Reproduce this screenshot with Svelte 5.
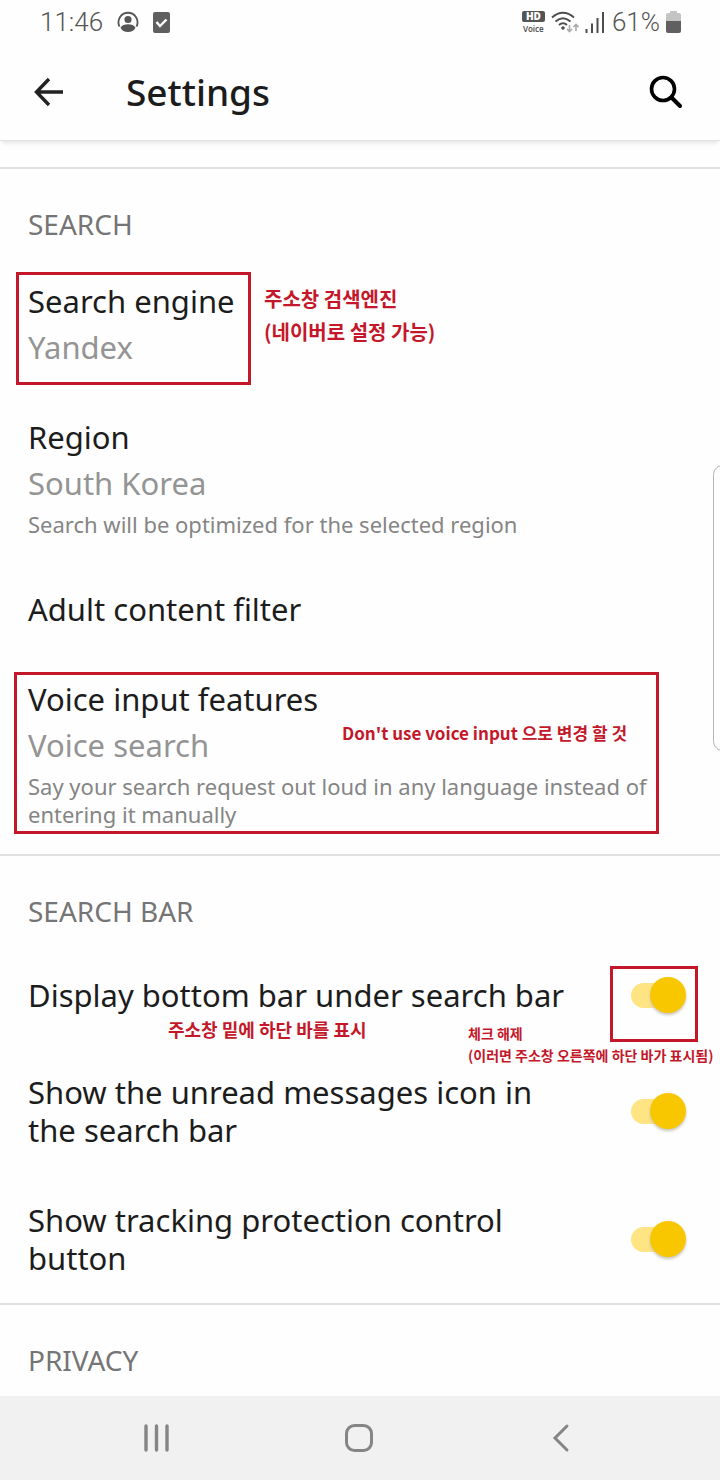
<script>
  let searchItems = [
    {
      title: "Search engine",
      value: "Yandex",
      mark: "mark-engine",
      note: ["주소창 검색엔진", "(네이버로 설정 가능)"],
      noteClass: "note-engine",
    },
    {
      title: "Region",
      value: "South Korea",
      text: "Search will be optimized for the selected region",
    },
    { title: "Adult content filter" },
    {
      title: "Voice input features",
      value: "Voice search",
      text: "Say your search request out loud in any language instead of entering it manually",
      mark: "mark-voice",
      note: ["Don't use voice input 으로 변경 할 것"],
      noteClass: "note-voice",
    },
  ];

  let barItems = [
    { id: "bottom-bar", title: "Display bottom bar under search bar", on: true },
    { id: "unread", title: "Show the unread messages icon in the search bar", on: true },
    { id: "tracking", title: "Show tracking protection control button", on: true },
  ];
</script>

<div class="screen">
  <div class="status">
    <div class="status-side">
      <span class="clock">11:46</span>
      <svg class="person" width="22" height="22" viewBox="0 0 22 22">
        <path d="M2.500 15.500a9.500 9.500 0 1 1 17 0" fill="none" stroke="#555" stroke-width="1.800" />
        <circle cx="11" cy="8.500" r="3.600" fill="#555" />
        <path d="M3.500 16.500c2-4.500 13-4.500 15 0c-2 6-13 6-15 0z" fill="#555" />
      </svg>
      <svg width="17" height="21" viewBox="0 0 17 21">
        <rect width="17" height="21" rx="2" fill="#606060" />
        <path d="M3.500 10l3.500 4l6.500-6.500" fill="none" stroke="#fff" stroke-width="2.400" />
      </svg>
    </div>
    <div class="status-side right">
      <span class="hd"><b>HD</b><span>Voice</span></span>
      <svg class="wifi" width="28" height="22" viewBox="0 0 28 22">
        <g fill="none" stroke="#4d4d4d" stroke-width="2">
          <path d="M1 6.500q11-9.500 22 0" />
          <path d="M4.500 10.500q7.500-6.500 15 0" />
          <path d="M8 14q4-3.500 8 0" />
        </g>
        <circle cx="12" cy="17" r="1.800" fill="#4d4d4d" />
        <g fill="none" stroke="#aaa" stroke-width="1.600">
          <path d="M18.500 14v6.500M16 18l2.500 2.500l2.500-2.500" />
          <path d="M25 20v-6.500M22.500 16l2.500-2.500l2.500 2.500" />
        </g>
      </svg>
      <svg class="signal" width="21" height="21" viewBox="0 0 21 21">
        <path d="M1.500 17v4M7 11.500v9.500M12.500 6v15M18 0v21" stroke="#4d4d4d" stroke-width="2" />
      </svg>
      <span class="battery-text">61%</span>
      <svg width="15" height="22" viewBox="0 0 15 22">
        <path d="M4 0h7v2h2q2 0 2 2v6H0V4q0-2 2-2h2z" fill="#c4c4c4" />
        <path d="M0 10h15v10q0 2-2 2H2q-2 0-2-2z" fill="#606060" />
      </svg>
    </div>
  </div>

  <header class="app-bar">
    <button class="icon-button" aria-label="Back">
      <svg width="30" height="30" viewBox="0 0 30 30">
        <path d="M15 2L2.500 15L15 28M2.500 15H29" fill="none" stroke="#222" stroke-width="3.400" />
      </svg>
    </button>
    <h1>Settings</h1>
    <button class="icon-button" aria-label="Search">
      <svg width="34" height="34" viewBox="0 0 34 34">
        <circle cx="14" cy="14" r="11.500" fill="none" stroke="#000" stroke-width="3.600" />
        <path d="M22.500 22.500L31 31" stroke="#000" stroke-width="4" stroke-linecap="round" />
      </svg>
    </button>
  </header>

  <main>
    <section class="first">
      <h2>SEARCH</h2>
      {#each searchItems as item}
        <div class="item">
          <button class="row">
            <span class="title">{item.title}</span>
            {#if item.value}<span class="value">{item.value}</span>{/if}
            {#if item.text}<span class="text">{item.text}</span>{/if}
          </button>
          {#if item.mark}<div class="mark {item.mark}"></div>{/if}
          {#if item.note}
            <div class="note {item.noteClass}">
              {#each item.note as line}<div>{line}</div>{/each}
            </div>
          {/if}
        </div>
      {/each}
    </section>

    <section>
      <h2>SEARCH BAR</h2>
      {#each barItems as item, i}
        <div class="item switch-row">
          <label class="title" for={item.id}>{item.title}</label>
          <input class="switch" type="checkbox" id={item.id} bind:checked={item.on} />
          {#if i === 0}
            <div class="mark mark-switch"></div>
            <div class="note note-bar">주소창 밑에 하단 바를 표시</div>
            <div class="note note-switch">
              <div>체크 해제</div>
              <div>(이러면 주소창 오른쪽에 하단 바가 표시됨)</div>
            </div>
          {/if}
        </div>
      {/each}
    </section>

    <section>
      <h2>PRIVACY</h2>
    </section>
  </main>

  <nav>
    <button aria-label="Recent apps">
      <svg width="30" height="30" viewBox="0 0 30 30">
        <path d="M4 3v24M14.500 3v24M25 3v24" stroke="#858585" stroke-width="3.400" stroke-linecap="round" />
      </svg>
    </button>
    <button aria-label="Home">
      <svg width="30" height="30" viewBox="0 0 30 30">
        <rect x="2.500" y="2.500" width="25" height="25" rx="8" fill="none" stroke="#858585" stroke-width="3" />
      </svg>
    </button>
    <button aria-label="Back">
      <svg width="30" height="30" viewBox="0 0 30 30">
        <path d="M22 3L10 15L22 27" fill="none" stroke="#858585" stroke-width="3" stroke-linecap="round" />
      </svg>
    </button>
  </nav>

  <div class="edge-handle"></div>
</div>

<style>
  :global(body) {
    background: #fff;
  }

  .screen {
    position: relative;
    display: flex;
    flex-direction: column;
    height: 100vh;
    overflow: hidden;
    background: #fefefe;
    color: #1c1c1c;
    font-family: "Noto Sans", "Noto Sans CJK KR", sans-serif;
  }

  button {
    padding: 0;
    border: 0;
    background: none;
    color: inherit;
    font: inherit;
    text-align: left;
  }

  svg {
    display: block;
    flex: none;
  }

  .status {
    display: flex;
    flex: none;
    justify-content: space-between;
    height: 44px;
    padding: 0 39px 0 40px;
    color: #555;
    font-family: Roboto, sans-serif;
    font-size: 26px;
    font-weight: 300;
  }

  .status-side {
    display: flex;
    align-items: center;
    gap: 14px;
  }

  .right {
    gap: 6px;
  }

  .hd {
    display: flex;
    flex-direction: column;
    align-items: center;
    gap: 1px;
    font-family: "Noto Sans", sans-serif;
    font-size: 8px;
    font-weight: 600;
    line-height: 11px;
  }

  .hd b {
    width: 23px;
    border-radius: 2px;
    background: #555;
    color: #fff;
    font-size: 10px;
    text-align: center;
  }

  .app-bar {
    display: flex;
    flex: none;
    align-items: center;
    height: 96px;
    padding: 0 37px 0 34px;
    border-bottom: 1px solid #e2e2e2;
    box-shadow: 0 4px 4px -2px #e4e4e4;
  }

  .icon-button {
    flex: none;
  }

  h1 {
    flex: 1;
    margin: 0 0 0 62px;
    font-size: 37px;
    font-weight: 500;
    line-height: 48px;
  }

  main {
    flex: 1;
    min-height: 0;
    overflow: hidden;
  }

  section {
    border-top: 2px solid #e0e0e0;
  }

  .first {
    margin-top: 26px;
  }

  h2 {
    margin: 0;
    padding: 36px 28px 13px;
    color: #757575;
    font-size: 28px;
    font-weight: 400;
    line-height: 38px;
  }

  .item {
    position: relative;
  }

  .row {
    display: flex;
    flex-direction: column;
    gap: 8px;
    width: 100%;
    padding: 26px 28px;
  }

  .title,
  .value {
    font-size: 31px;
    line-height: 38px;
  }

  .value {
    color: #949494;
  }

  .text {
    color: #858585;
    font-size: 22px;
    line-height: 28px;
  }

  .switch-row {
    display: flex;
    align-items: center;
    gap: 48px;
    box-sizing: border-box;
    min-height: 104px;
    padding: 26px 34px 26px 28px;
  }

  .switch-row .title {
    flex: 1;
  }

  .switch {
    display: flex;
    flex: none;
    align-items: center;
    width: 55px;
    height: 36px;
    margin: 0;
    appearance: none;
  }

  .switch::before {
    width: 50px;
    height: 25px;
    border-radius: 13px;
    background: #fee482;
    content: "";
  }

  .switch::after {
    width: 36px;
    height: 36px;
    margin-left: -31px;
    border-radius: 50%;
    background: #f9c700;
    box-shadow: 0 2px 3px #c9c5b8;
    content: "";
  }

  .switch:not(:checked)::before {
    background: #ccc;
  }

  .switch:not(:checked)::after {
    margin-left: -50px;
    background: #f5f5f5;
  }

  /* Red frames and remarks drawn over the settings */
  .mark {
    position: absolute;
    box-sizing: border-box;
    border: 3px solid #c4182a;
    pointer-events: none;
  }

  .mark-engine {
    top: 16px;
    left: 16px;
    width: 235px;
    height: 113px;
  }

  .mark-voice {
    top: 18px;
    left: 14px;
    width: 645px;
    height: 162px;
  }

  .mark-switch {
    top: 23px;
    right: 22px;
    width: 88px;
    height: 76px;
  }

  .note {
    position: absolute;
    color: #c4182a;
    font-family: "Noto Sans CJK KR", sans-serif;
    font-size: 18px;
    font-weight: 700;
    line-height: 22px;
    white-space: nowrap;
    pointer-events: none;
  }

  .note-engine {
    top: 26px;
    left: 264px;
    font-size: 20px;
    line-height: 33px;
  }

  .note-voice {
    top: 68px;
    left: 342px;
    font-size: 17px;
  }

  .note-bar {
    top: 75px;
    left: 168px;
  }

  .note-switch {
    top: 79px;
    left: 468px;
    font-size: 14px;
  }

  nav {
    display: flex;
    flex: none;
    align-items: center;
    justify-content: space-between;
    height: 84px;
    padding: 0 145px 0 142px;
    background: #f1f1f1;
  }

  .edge-handle {
    position: absolute;
    top: 465px;
    right: -12px;
    box-sizing: border-box;
    width: 19px;
    height: 286px;
    border: 1px solid #b5b5b5;
    border-radius: 12px;
  }
</style>
